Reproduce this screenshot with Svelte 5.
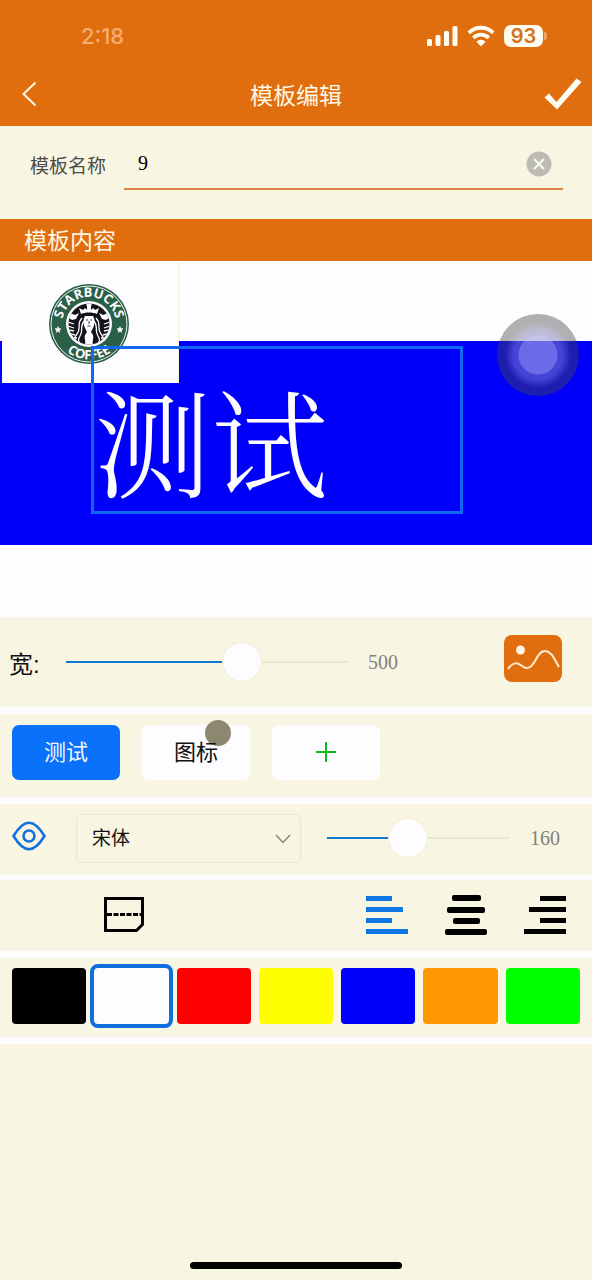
<script>
  let name = $state('9');
  let width = $state(500);
  let size = $state(160);
  let font = $state('宋体');
  let align = $state('left');
  let color = $state('#fdfcff');

  const maxWidth = 775;
  const maxSize = 372;
  const colors = [
    { label: '黑', value: '#000000' },
    { label: '白', value: '#fdfcff' },
    { label: '红', value: '#ff0000' },
    { label: '黄', value: '#ffff00' },
    { label: '蓝', value: '#0000fa' },
    { label: '橙', value: '#ff9700' },
    { label: '绿', value: '#00ff00' }
  ];
</script>

<div class="page">
  <header>
    <div class="status">
      <span class="time">2:18</span>
      <div class="signals">
        <svg width="31" height="20" viewBox="0 0 31 20" fill="#fffdf0" aria-hidden="true">
          <rect x="0" y="13" width="5" height="7" rx="1.5" />
          <rect x="8.500" y="9" width="5" height="11" rx="1.500" />
          <rect x="17" y="5" width="5" height="15" rx="1.500" />
          <rect x="25.500" y="0" width="5" height="20" rx="1.500" />
        </svg>
        <svg width="28" height="22" viewBox="0 0 28 22" fill="none" stroke="#fffdf0" stroke-width="3.800" aria-hidden="true">
          <path d="M1.800 7.800a17.300 17.300 0 0 1 24.400 0" />
          <path d="M6.300 12.800a11 11 0 0 1 15.400 0" />
          <path d="M14 21.500l-4.600-4.800a6.600 6.600 0 0 1 9.200 0z" fill="#fffdf0" stroke="none" />
        </svg>
        <div class="battery"><span>93</span><i></i></div>
      </div>
    </div>
    <nav>
      <button class="plain" aria-label="返回">
        <svg width="16" height="26" viewBox="0 0 16 26" fill="none" stroke="#fff8e6" stroke-width="2"><path d="M13.500 1.500L1.500 13l12 11.500" /></svg>
      </button>
      <h1>模板编辑</h1>
      <button class="plain save" aria-label="保存">
        <svg width="38" height="32" viewBox="0 0 38 32" fill="#fffef5"><path d="M0.500 19.500l4.500-4 7.500 8.500L32.500 0.500l5 3.500L13 31.500z" /></svg>
      </button>
    </nav>
  </header>

  <section class="form">
    <label for="template-name">模板名称</label>
    <div class="field">
      <input id="template-name" type="text" bind:value={name} />
      <button class="plain" aria-label="清除" onclick={() => (name = '')}>
        <svg width="26" height="26" viewBox="0 0 26 26"><circle cx="13" cy="13" r="12.500" fill="#bdbcb2" /><path d="M8 8l10 10M18 8L8 18" stroke="#fdfcf6" stroke-width="2" /></svg>
      </button>
    </div>
  </section>

  <h2>模板内容</h2>

  <section class="canvas">
    <div class="strip"></div>
    <div class="picture">
      <svg width="82" height="82" viewBox="-41 -41 82 82" role="img" aria-label="STARBUCKS COFFEE">
        <defs>
          <path id="arc-top" d="M-26.500 5A27 27 0 1 1 26.500 5" />
          <path id="arc-bottom" d="M-35.500 0A35.500 35.500 0 0 0 35.500 0" />
          <clipPath id="disc"><circle r="20.500" /></clipPath>
        </defs>
        <circle r="40" fill="#2b5f48" />
        <circle r="38" fill="none" stroke="#eef5ee" stroke-width="1" />
        <circle r="23" fill="#fdfcff" />
        <circle r="20.500" fill="#15131a" />
        <g clip-path="url(#disc)">
          <g fill="none" stroke="#fdfcff" stroke-width="1.300">
            <path d="M-7-6C-13 0-7 4-12 10S-12 17-9 21" />
            <path d="M-5-3C-10 3-5 6-9 12s1 5-1 9" />
            <path d="M7-6C13 0 7 4 12 10S12 17 9 21" />
            <path d="M5-3C10 3 5 6 9 12s-1 5 1 9" />
            <path d="M-21-2l6 2M-21 2l6 2M-20 6l5 1M-18 10l4 1M-16 14l4 0M21-2l-6 2M21 2l-6 2M20 6l-5 1M18 10l-4 1M16 14l-4 0" />
          </g>
          <path d="M-19-11l5 2 4-2-3 6-4 1-3-2zM19-11l-5 2-4-2 3 6 4 1 3-2z" fill="#fdfcff" />
          <path d="M-4 21c1-5-1-6 0-10l2-3-2-4C-6 0-6-5-4-8h8c2 3 2 8 0 12L2 8l2 3c1 4-1 5 0 10z" fill="#fdfcff" />
          <path d="M-3-4h2M1-4h2M0-3v3M-1.500 2h3" stroke="#15131a" stroke-width=".8" />
          <path d="M-8-10l-2-6 4 2 2-2 2 2 0-4-1-1 3-3 3 3-1 1 0 4 2-2 2 2 4-2-2 6C4-12-4-12-8-10z" fill="#fdfcff" />
        </g>
        <path d="M-31 2.500l.9 2 2.200.2-1.700 1.500.5 2.200-1.900-1.200-1.900 1.200.5-2.200-1.700-1.500 2.200-.2z" fill="#fdfcff" stroke="#fdfcff" stroke-width=".5" />
        <path d="M31 2.500l.9 2 2.200.2-1.700 1.500.5 2.200-1.900-1.200-1.900 1.200.5-2.200-1.700-1.500 2.200-.2z" fill="#fdfcff" stroke="#fdfcff" stroke-width=".5" />
        <text class="ring"><textPath href="#arc-top" startOffset="50%" text-anchor="middle">STARBUCKS</textPath></text>
        <text class="ring"><textPath href="#arc-bottom" startOffset="50%" text-anchor="middle">COFFEE</textPath></text>
      </svg>
    </div>
    <div class="textbox">测试</div>
    <div class="assist"></div>
  </section>

  <section class="row width-row">
    <label for="width-range">宽:</label>
    <input
      id="width-range"
      type="range"
      min="0"
      max={maxWidth}
      bind:value={width}
      style:--fill="{(width / maxWidth) * 100}%"
    />
    <output for="width-range">{width}</output>
    <button class="plain image-button" aria-label="选择图片">
      <svg width="60" height="48" viewBox="0 0 60 48"><rect x="1" width="58" height="47" rx="8" fill="#e16e0e" /><circle cx="17.500" cy="15" r="4.500" fill="#fff3e3" /><path d="M5 34C9 28 14 26 19 31c5 4 9 2 13-5 5-10 10-13 16-7 3 3 5 8 8 13" fill="none" stroke="#ffe9d0" stroke-width="2" /></svg>
    </button>
  </section>

  <section class="row tabs">
    <button class="tab active"><span>测试</span></button>
    <button class="tab"><i class="touch"></i><span>图标</span></button>
    <button class="tab" aria-label="添加">
      <svg width="20" height="20" viewBox="0 0 20 20"><path d="M10 0v20M0 10h20" stroke="#10b51c" stroke-width="2" /></svg>
    </button>
  </section>

  <section class="row font-row">
    <button class="plain" aria-label="显示">
      <svg width="34" height="30" viewBox="0 0 34 30" fill="none" stroke="#146fe0" stroke-width="2.600"><path d="M1.500 15C7 6 12 1.800 17 1.800S27 6 32.500 15C27 24 22 28.200 17 28.200S7 24 1.500 15z" /><circle cx="17" cy="15" r="5.500" /></svg>
    </button>
    <div class="select">
      <select aria-label="字体" bind:value={font}>
        <option>宋体</option>
        <option>黑体</option>
      </select>
      <svg width="16" height="10" viewBox="0 0 16 10" fill="none" stroke="#87867d" stroke-width="1.500" aria-hidden="true"><path d="M1 1l7 7.500L15 1" /></svg>
    </div>
    <input
      type="range"
      aria-label="字号"
      min="0"
      max={maxSize}
      bind:value={size}
      style:--fill="{(size / maxSize) * 100}%"
    />
    <output>{size}</output>
  </section>

  <section class="row align-row">
    <button class="plain" aria-label="换行">
      <svg width="40" height="36" viewBox="0 0 40 36" fill="none" stroke="#000" stroke-width="3"><path d="M1.500 1.500h37v26l-6 6h-31z" /><path d="M3 17.500h34" stroke-dasharray="5 1.500" /></svg>
    </button>
    <div class="aligns">
      <button class="plain" class:on={align === 'left'} aria-label="左对齐" onclick={() => (align = 'left')}>
        <svg width="42" height="38" viewBox="0 0 42 38" fill="currentColor"><path d="M0 0h26v5H0zM0 11h37v5H0zM0 22h26v5H0zM0 33h42v5H0z" /></svg>
      </button>
      <button class="plain" class:on={align === 'center'} aria-label="居中" onclick={() => (align = 'center')}>
        <svg width="42" height="40" viewBox="0 0 42 40" fill="currentColor"><rect x="7" y="0" width="29" height="6" rx="2" /><rect x="2" y="12" width="38" height="6" rx="2" /><rect x="8" y="23" width="27" height="6" rx="2" /><rect x="0" y="34" width="42" height="6" rx="2" /></svg>
      </button>
      <button class="plain" class:on={align === 'right'} aria-label="右对齐" onclick={() => (align = 'right')}>
        <svg width="42" height="38" viewBox="0 0 42 38" fill="currentColor"><path d="M16 0h26v5H16zM5 11h37v5H5zM16 22h26v5H16zM0 33h42v5H0z" /></svg>
      </button>
    </div>
  </section>

  <section class="row swatches">
    {#each colors as c}
      <button
        class="swatch"
        class:selected={color === c.value}
        aria-label={c.label}
        style:background={c.value}
        onclick={() => (color = c.value)}
      ></button>
    {/each}
  </section>

  <footer><i></i></footer>
</div>

<style>
  :global(body) {
    background: #f8f6e3;
  }
  .page {
    min-height: 100vh;
    display: flex;
    flex-direction: column;
    background: #f8f6e3;
    color: #111;
    font-family: 'Liberation Sans', 'Noto Sans CJK SC', sans-serif;
    font-size: 22px;
  }
  .page * {
    box-sizing: border-box;
  }
  .plain {
    display: flex;
    padding: 0;
    border: 0;
    background: none;
    color: #000;
  }
  svg {
    display: block;
    flex: none;
  }

  header {
    background: #e16e0e;
    color: #fff8e6;
  }
  .status {
    height: 68px;
    padding: 4px 45px 0 81px;
    display: flex;
    align-items: center;
    justify-content: space-between;
  }
  .time {
    font: 500 22px Inter, sans-serif;
    color: #f5ad72;
  }
  .signals {
    display: flex;
    align-items: center;
    gap: 9px;
  }
  .battery {
    display: flex;
    align-items: center;
    gap: 1px;
  }
  .battery span {
    width: 39px;
    border-radius: 7px;
    background: #fffdf0;
    color: #d27020;
    font: 600 20px/22px Inter, sans-serif;
    text-align: center;
  }
  .battery i {
    width: 3px;
    height: 8px;
    border-radius: 0 3px 3px 0;
    background: #f0a468;
  }
  nav {
    height: 58px;
    padding: 0 10px 6px 22px;
    display: grid;
    grid-template-columns: 38px 1fr 50px;
    align-items: center;
  }
  .save {
    justify-self: end;
  }
  h1,
  h2 {
    margin: 0;
    font-size: 23px;
    font-weight: 400;
  }
  h1 {
    text-align: center;
  }

  .form {
    height: 93px;
    padding: 0 29px 16px 30px;
    display: flex;
    align-items: center;
    gap: 18px;
  }
  .form label {
    font-size: 19px;
    color: #4d4c47;
  }
  .field {
    flex: 1;
    height: 50px;
    padding: 0 11px 0 14px;
    display: flex;
    align-items: center;
    border-bottom: 2px solid #dc8444;
  }
  .field input {
    flex: 1;
    min-width: 0;
    padding: 0;
    border: 0;
    outline: 0;
    background: none;
    font: 20px 'Liberation Serif', serif;
  }
  h2 {
    padding: 2px 24px 0;
    line-height: 40px;
    background: #e16e0e;
    color: #fff8e6;
  }

  .canvas {
    position: relative;
    height: 356px;
    padding-top: 80px;
    background: #fdfcff;
  }
  .strip {
    height: 204px;
    background: #0000fa;
  }
  .picture {
    position: absolute;
    left: 2px;
    top: 1px;
    width: 177px;
    height: 121px;
    padding: 2px 2px 0 0;
    display: grid;
    place-items: center;
    background: #fdfcff;
    border-right: 1px solid #f6f4dc;
  }
  .ring {
    fill: #fdfcff;
    font: 700 13px 'Open Sans', sans-serif;
  }
  .textbox {
    position: absolute;
    left: 91px;
    top: 85px;
    width: 372px;
    height: 168px;
    border: 3px solid #0f69f5;
    color: #fdfcff;
    font: 300 117px/178px 'Noto Serif CJK SC', 'Noto Sans CJK SC', serif;
  }
  .assist {
    position: absolute;
    right: 13px;
    top: 53px;
    width: 82px;
    height: 82px;
    border-radius: 50%;
    background: radial-gradient(circle, rgb(165 165 225 / 65%) 0 19px, rgb(130 130 185 / 52%) 20px 24px, rgb(110 110 140 / 48%) 28px, rgb(70 70 70 / 42%) 33px);
  }

  .row {
    display: flex;
    align-items: center;
    border-bottom: 7px solid #fdfcff;
  }
  .width-row {
    height: 97px;
    padding: 0 29px 0 9px;
  }
  .width-row label {
    width: 57px;
    font-size: 24px;
  }
  .width-row input {
    flex: 0 1 282px;
  }
  .image-button {
    margin: 0 0 6px auto;
  }
  output {
    margin-left: 20px;
    font: 20px 'Liberation Serif', serif;
    color: #83827c;
  }
  input[type='range'] {
    appearance: none;
    min-width: 0;
    height: 40px;
    margin: 0;
    background: linear-gradient(90deg, #1475cc var(--fill), #eae8d2 var(--fill)) center / 100% 2px no-repeat;
  }
  input[type='range']::-webkit-slider-thumb {
    appearance: none;
    width: 40px;
    height: 40px;
    border: 1px solid #f0eed8;
    border-radius: 50%;
    background: #fdfcff;
  }

  .tabs {
    height: 90px;
    padding: 0 12px 6px;
    gap: 22px;
  }
  .tab {
    position: relative;
    width: 108px;
    height: 55px;
    padding: 0 0 2px;
    display: grid;
    place-items: center;
    border: 0;
    border-radius: 7px;
    background: #fdfcff;
    color: #111;
    font: inherit;
  }
  .tab.active {
    background: #0a72fa;
    color: #f4f8ff;
  }
  .tab span {
    position: relative;
    padding-bottom: 3px;
  }
  .touch {
    position: absolute;
    left: 63px;
    top: -5px;
    width: 26px;
    height: 26px;
    border-radius: 50%;
    background: #8c8870;
  }

  .font-row {
    height: 76px;
    padding: 0 32px 3px 12px;
    border-bottom-width: 5px;
  }
  .font-row > .plain {
    padding-bottom: 5px;
  }
  .select {
    position: relative;
    flex: 0 1 226px;
    margin: 0 26px 0 30px;
  }
  .select select {
    appearance: none;
    width: 100%;
    height: 49px;
    padding: 0 15px 4px;
    border: 1px solid #eae8d2;
    border-radius: 5px;
    background: none;
    color: #111;
    font: 19px 'Noto Sans CJK SC', sans-serif;
  }
  .select svg {
    position: absolute;
    right: 10px;
    top: 20px;
  }
  .font-row input {
    flex: 0 1 184px;
  }

  .align-row {
    height: 78px;
    padding: 0 26px 2px 104px;
    justify-content: space-between;
  }
  .aligns {
    display: flex;
    align-items: center;
    gap: 37px;
  }
  .aligns .on {
    color: #0f76e6;
  }

  .swatches {
    height: 86px;
    padding: 0 12px 4px;
    gap: 8px;
  }
  .swatch {
    flex: 1;
    height: 56px;
    border: 0;
    border-radius: 4px;
  }
  .swatch.selected {
    outline: 4px solid #0f6fdc;
  }

  footer {
    margin-top: auto;
    padding-bottom: 11px;
    display: flex;
    justify-content: center;
  }
  footer i {
    width: 212px;
    height: 7px;
    border-radius: 4px;
    background: #000;
  }
</style>
